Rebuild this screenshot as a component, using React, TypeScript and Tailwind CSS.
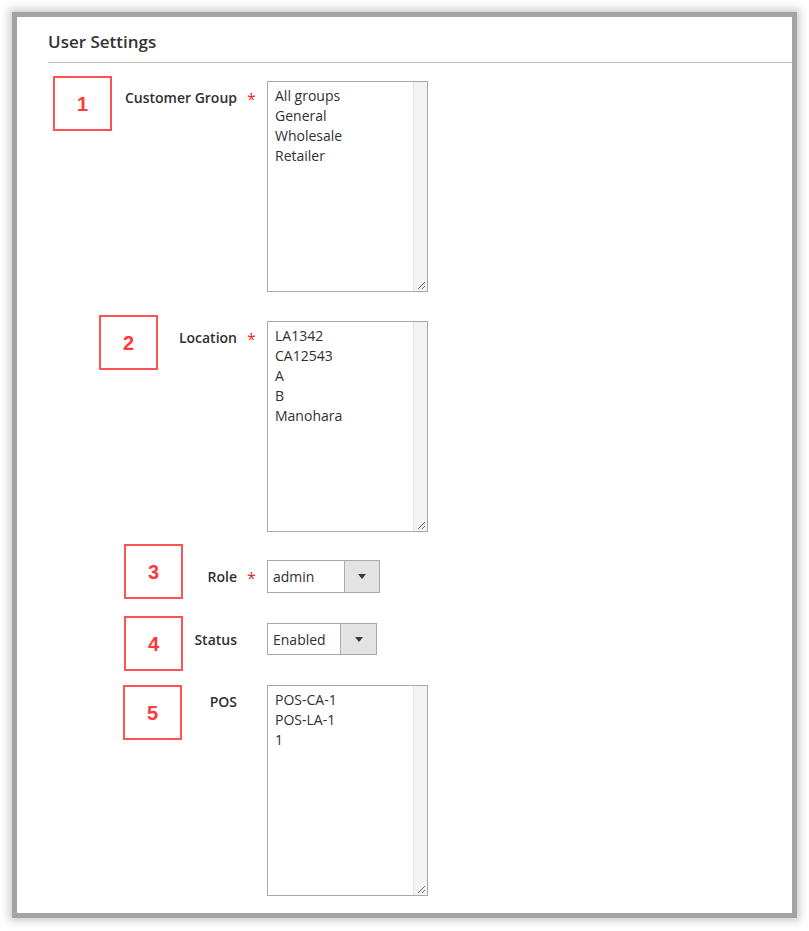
type ListRow = { kind: "list"; items: string[] };
type SelectRow = { kind: "select"; value: string; width: number; btn: number; height: number };

type Row = {
  num: number;
  label: string;
  required: boolean;
  boxX: number;
  boxY: number;
  gap: number;
  height: number;
  control: ListRow | SelectRow;
};

const rows: Row[] = [
  { num: 1, label: "Customer Group", required: true, boxX: 36, boxY: -5, gap: 0, height: 211, control: { kind: "list", items: ["All groups", "General", "Wholesale", "Retailer"] } },
  { num: 2, label: "Location", required: true, boxX: 82, boxY: -6, gap: 29, height: 211, control: { kind: "list", items: ["LA1342", "CA12543", "A", "B", "Manohara"] } },
  { num: 3, label: "Role", required: true, boxX: 107, boxY: -16, gap: 28, height: 33, control: { kind: "select", value: "admin", width: 113, btn: 35, height: 33 } },
  { num: 4, label: "Status", required: false, boxX: 107, boxY: -7, gap: 30, height: 32, control: { kind: "select", value: "Enabled", width: 110, btn: 36, height: 32 } },
  { num: 5, label: "POS", required: false, boxX: 106, boxY: 0, gap: 30, height: 211, control: { kind: "list", items: ["POS-CA-1", "POS-LA-1", "1"] } },
];

function ListBox({ items }: { items: string[] }) {
  return (
    <div className="relative flex h-[211px] w-[161px] border border-[#a9a9a9] bg-white">
      <div className="flex-1 pl-[7px] pt-[4px] text-[14px] leading-[20px] text-[#303030]">
        {items.map((item) => (
          <div key={item}>{item}</div>
        ))}
      </div>
      <div className="w-[14px] border-l border-[#e4e4e4] bg-[#f3f3f3]" />
      <svg className="absolute bottom-[1px] right-[1px]" width="10" height="10" viewBox="0 0 10 10">
        <path d="M9 2 L2 9 M9 6 L6 9" stroke="#6a6a6a" strokeWidth="1" fill="none" />
      </svg>
    </div>
  );
}

function SelectBox({ c }: { c: SelectRow }) {
  return (
    <div
      className="flex border border-[#a9a9a9] bg-white"
      style={{ width: c.width, height: c.height }}
    >
      <div className="flex flex-1 items-center pl-[5px] text-[14px] text-[#303030]">{c.value}</div>
      <div
        className="flex items-center justify-center border-l border-[#adadad] bg-[#e3e3e3]"
        style={{ width: c.btn }}
      >
        <svg width="8" height="5" viewBox="0 0 8 5">
          <path d="M0 0 H8 L4 5 Z" fill="#3a3a3a" />
        </svg>
      </div>
    </div>
  );
}

export default function App() {
  return (
    <div className="min-h-[931px] bg-white p-[17px] font-['Open_Sans',sans-serif]">
      <div className="h-[896px] w-[775px] bg-white shadow-[0_0_0_5px_#a3a3a3,0_0_8px_8px_rgba(170,170,170,0.6)]">
        <h2 className="pl-[31px] pt-[13px] text-[17px] font-semibold leading-[24px] text-[#333]">User Settings</h2>
        <div className="ml-[31px] mt-[8px] h-px bg-[#c6bead]" />

        <div className="mt-[18px] flex flex-col">
          {rows.map((row) => (
            <div
              key={row.num}
              className="flex shrink-0 items-start"
              style={{ marginTop: row.gap, height: row.height }}
            >
              <div className="flex h-full w-[250px] shrink-0 items-start">
                <div
                  className="flex h-[55px] w-[59px] shrink-0 items-center justify-center border-2 border-[#ff5252] font-['Liberation_Sans',Arial,sans-serif] text-[20px] font-bold text-[#ff3838]"
                  style={{ marginLeft: row.boxX, marginTop: row.boxY }}
                >
                  {row.num}
                </div>
                <div className="flex-1" />
                <div className="whitespace-nowrap pt-[7px] text-[14px] font-semibold leading-[20px] text-[#303030]">
                  {row.label}
                </div>
                <div className="w-[30px] pl-[10px] pt-[7px] text-[16px] leading-[22px] text-[#e02b27]">
                  {row.required ? "*" : ""}
                </div>
              </div>
              {row.control.kind === "list" ? (
                <ListBox items={row.control.items} />
              ) : (
                <SelectBox c={row.control} />
              )}
            </div>
          ))}
        </div>
      </div>
    </div>
  );
}
